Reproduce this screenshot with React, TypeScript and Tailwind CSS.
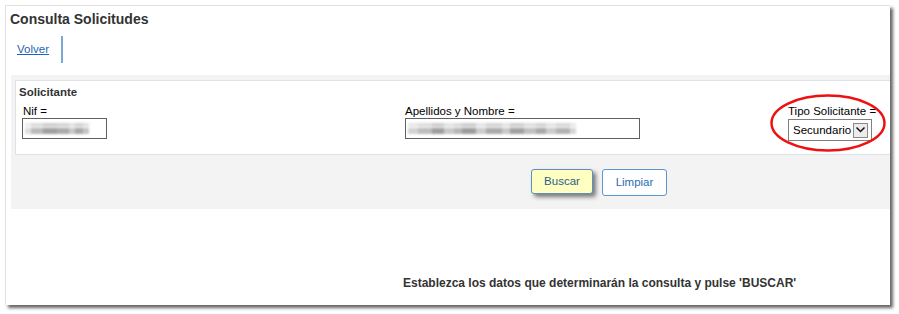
import React from "react";

const nifBlocks: [number, string][] = [
  [6, "#dedede"], [12, "#b9b9b9"], [14, "#9f9f9f"], [12, "#aaaaaa"], [6, "#c8c8c8"], [8, "#a8a8a8"], [6, "#c4c4c4"],
];
const nameBlocks: [number, string][] = [
  [10, "#d2d2d2"], [14, "#bcbcbc"], [12, "#9e9e9e"], [10, "#c8c8c8"], [8, "#b5b5b5"], [14, "#9c9c9c"], [10, "#cccccc"],
  [16, "#aaaaaa"], [8, "#c9c9c9"], [14, "#a0a0a0"], [12, "#bfbfbf"], [10, "#a8a8a8"], [10, "#cacaca"], [14, "#b2b2b2"], [6, "#d6d6d6"],
];

function Blur({ blocks }: { blocks: [number, string][] }) {
  return (
    <div className="flex flex-col gap-[1px] blur-[0.8px]">
      <div className="flex h-[4px]">
        {blocks.map(([w, c], i) => (
          <div key={i} style={{ width: w, backgroundColor: c, opacity: 0.5 }} />
        ))}
      </div>
      <div className="flex h-[6px]">
        {blocks.map(([w, c], i) => (
          <div key={i} style={{ width: w, backgroundColor: c }} />
        ))}
      </div>
    </div>
  );
}

export default function App() {
  return (
    <div className="w-[899px] h-[314px] bg-white font-['Liberation_Sans',Arial,sans-serif] pt-[5px] pl-[5px]">
      <div className="relative w-[885px] h-[300px] overflow-hidden border-l border-t border-[#e2e2e2] bg-white shadow-[3px_3px_3px_rgba(0,0,0,0.6)]">
        <div className="pl-[4px] pt-[5px] text-[14px] leading-[16px] font-bold text-[#333333]">
          Consulta Solicitudes
        </div>

        <div className="mt-[9px] ml-[5px] flex h-[27px] w-[52px] items-center border-r-2 border-[#7ba6d6] pl-[6px]">
          <a href="#" className="text-[11.5px] leading-[13px] text-[#1f63b5] underline">
            Volver
          </a>
        </div>

        <div className="mt-[12px] ml-[5px] h-[134px] w-[1300px] bg-[#f3f3f3] pt-[5px] pl-[4px]">
          <div className="h-[75px] w-[1280px] border border-[#dce3ea] bg-white pl-[3px] pt-[5px]">
            <div className="text-[11.5px] leading-[13px] font-bold text-[#333333]">Solicitante</div>
            <div className="mt-[6px] ml-[3px] grid grid-cols-[383px_383px_383px] text-[11.5px] leading-[13px] text-black">
              <div className="flex flex-col">
                <span className="pl-[1px]">Nif =</span>
                <div className="flex h-[21px] w-[85px] items-center border border-[#606060] bg-white pl-[2px]">
                  <Blur blocks={nifBlocks} />
                </div>
              </div>
              <div className="flex flex-col">
                <span>Apellidos y Nombre =</span>
                <div className="flex h-[21px] w-[235px] items-center border border-[#606060] bg-white pl-[2px]">
                  <Blur blocks={nameBlocks} />
                </div>
              </div>
              <div className="flex flex-col">
                <span>Tipo Solicitante =</span>
                <div className="mt-[1px] flex h-[22px] w-[84px] items-center justify-between border border-[#808080] bg-white pl-[4px] pr-[3px]">
                  <span className="text-[11.5px]">Secundario</span>
                  <div className="flex h-[15px] w-[15px] items-center justify-center border border-[#8a8a8a] bg-[#ececec]">
                    <svg width="11" height="8" viewBox="0 0 11 8">
                      <polyline points="1.5,1.5 5.5,5.5 9.5,1.5" fill="none" stroke="#111" strokeWidth="1.5" />
                    </svg>
                  </div>
                </div>
              </div>
            </div>
          </div>

          <div className="mt-[14px] ml-[516px] flex items-start gap-[9px] text-[11.5px] leading-[13px]">
            <button className="flex h-[25px] w-[62px] items-center justify-center rounded-[3px] border border-[#5f8fc2] bg-[#ffffc2] text-[#2b5d8a] shadow-[3px_3px_4px_rgba(0,0,0,0.5)]">
              Buscar
            </button>
            <button className="flex h-[27px] w-[65px] items-center justify-center rounded-[3px] border border-[#5b97d3] bg-white text-[#2a6bb2]">
              Limpiar
            </button>
          </div>
        </div>

        <div className="mt-[67px] ml-[397px] text-[12px] leading-[14px] font-bold text-[#333333] whitespace-nowrap">
          Establezca los datos que determinarán la consulta y pulse 'BUSCAR'
        </div>

        <svg className="absolute left-[764px] top-[88px]" width="116" height="58" viewBox="0 0 116 58">
          <ellipse cx="58" cy="29" rx="56.5" ry="27.5" fill="none" stroke="#ee1111" strokeWidth="2.5" />
        </svg>
      </div>
    </div>
  );
}
